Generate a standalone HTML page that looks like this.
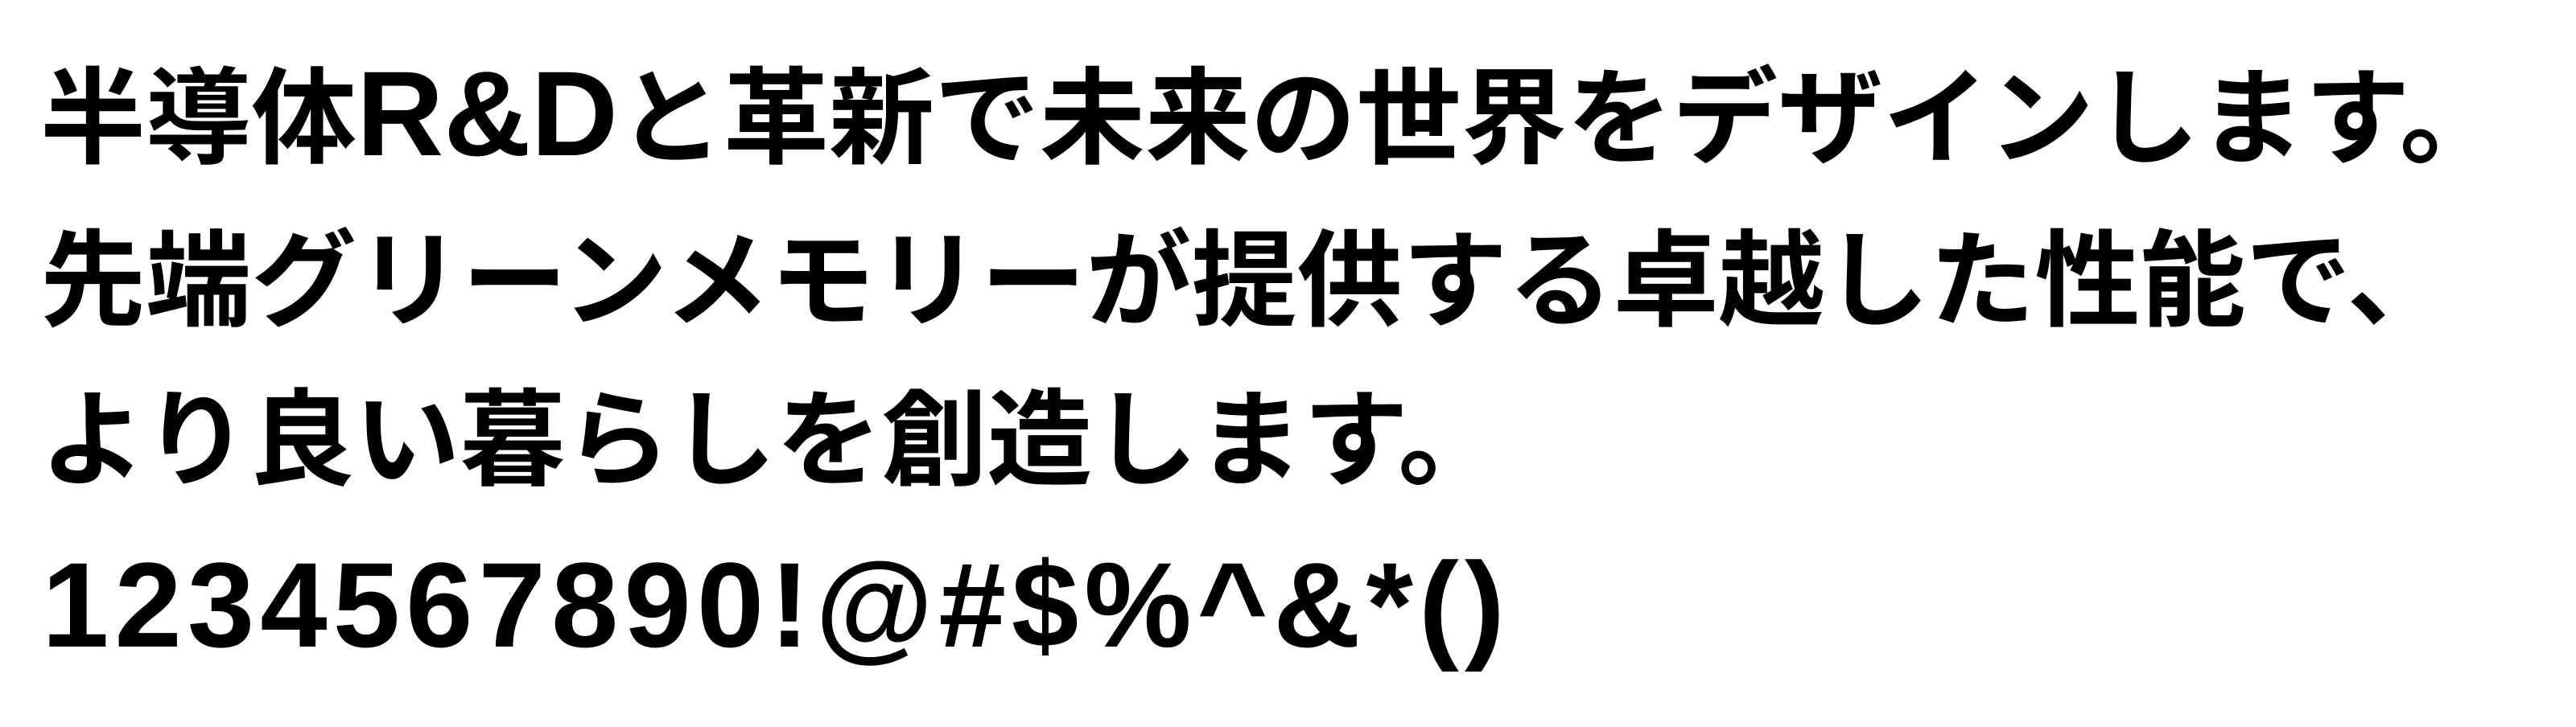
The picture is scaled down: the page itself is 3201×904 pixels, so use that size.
<!DOCTYPE html>
<html><head><meta charset="utf-8"><style>
html,body{margin:0;padding:0;background:#fff;}
body{width:3201px;height:904px;overflow:hidden;position:relative;}
.l{position:absolute;left:50px;white-space:nowrap;font-family:"Noto Sans CJK JP",sans-serif;font-weight:bold;font-size:131px;line-height:214px;color:#000;}
.la{font-family:"Liberation Sans",sans-serif;font-size:150px;font-weight:bold;}
.d{position:absolute;left:52px;top:677px;white-space:nowrap;font-family:"Liberation Sans",sans-serif;font-size:150px;font-weight:bold;line-height:150px;letter-spacing:7px;color:#000;}
</style></head><body>
<div class="l" style="top:29px">半導体<span class="la">R&amp;D</span>と革新で未来の世界をデザインします。</div>
<div class="l" style="top:231px">先端グリーンメモリーが提供する卓越した性能で、</div>
<div class="l" style="top:429px">より良い暮らしを創造します。</div>
<div class="d">1234567890!@#$%^&amp;*()</div>
</body></html>
